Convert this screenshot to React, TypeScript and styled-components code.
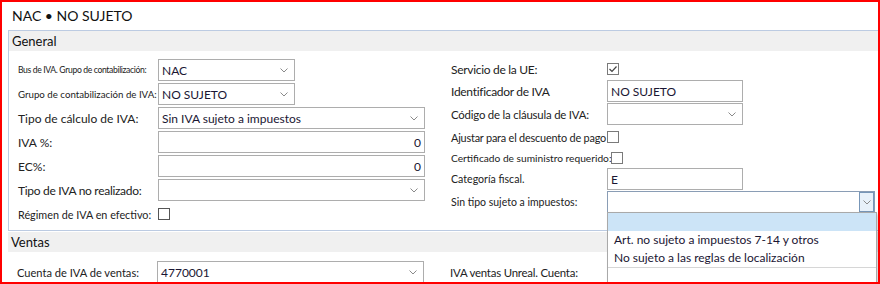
import styled, { createGlobalStyle } from "styled-components";

const GlobalStyle = createGlobalStyle`
  html, body {
    margin: 0;
    padding: 0;
    background: #ffffff;
  }
  body {
    font-family: Lato, "Liberation Sans", sans-serif;
    color: #1b1b1b;
  }
`;

const Frame = styled.div`
  position: relative;
  width: 880px;
  height: 284px;
  box-sizing: border-box;
  border: 2px solid #ff0000;
  padding-left: 6px;
  background: #ffffff;
  overflow: hidden;
`;

const Title = styled.div`
  height: 28px;
  line-height: 28px;
  padding-left: 4px;
  font-size: 14px;
  color: #111;
`;

const Section = styled.div<{ $boxed?: boolean }>`
  border: ${(p) => (p.$boxed ? "1px solid #bccbe2" : "none")};
  border-right: none;
  margin-top: ${(p) => (p.$boxed ? "0" : "1px")};
`;

const SectionHeader = styled.div`
  height: 20px;
  line-height: 20px;
  padding-left: 3px;
  background: #f0f0f0;
  font-size: 13px;
  color: #111;
`;

const Body = styled.div<{ $top: number }>`
  display: flex;
  gap: 26px;
  padding: ${(p) => p.$top}px 0 4px 9px;
`;

const Column = styled.div<{ $w?: number }>`
  display: flex;
  flex-direction: column;
  width: ${(p) => (p.$w ? `${p.$w}px` : "auto")};
`;

const Row = styled.div<{ $h: number }>`
  display: flex;
  align-items: center;
  height: ${(p) => p.$h}px;
`;

const Label = styled.div<{ $w: number; $size?: number; $track?: number }>`
  flex-shrink: 0;
  min-width: ${(p) => p.$w}px;
  font-size: ${(p) => p.$size ?? 12}px;
  letter-spacing: ${(p) => p.$track ?? 0}px;
  white-space: nowrap;
  color: #222;
`;

const Field = styled.div<{ $w: number; $focus?: boolean; $right?: boolean }>`
  position: relative;
  display: flex;
  align-items: center;
  justify-content: ${(p) => (p.$right ? "flex-end" : "space-between")};
  box-sizing: border-box;
  width: ${(p) => p.$w}px;
  height: 22px;
  padding: 0 3px;
  border: 1px solid ${(p) => (p.$focus ? "#8a9db5" : "#adadad")};
  background: #ffffff;
  font-size: 12px;
  color: #1a1633;
  white-space: nowrap;
`;

const ArrowSpot = styled.span<{ $focus?: boolean }>`
  display: flex;
  align-items: center;
  justify-content: center;
  width: 15px;
  height: 20px;
  margin-right: ${(p) => (p.$focus ? "-3px" : "0")};
  box-sizing: border-box;
  border: ${(p) => (p.$focus ? "1px solid #7796b8" : "none")};
  background: ${(p) => (p.$focus ? "#e8f1fa" : "transparent")};
`;

const Box = styled.span<{ $dark?: boolean }>`
  display: inline-flex;
  align-items: center;
  justify-content: center;
  width: 12px;
  height: 12px;
  box-sizing: border-box;
  border: 1px solid ${(p) => (p.$dark ? "#555" : "#7a7a7a")};
  background: #fff;
`;

const DropList = styled.div`
  position: absolute;
  top: 20px;
  left: -1px;
  width: 270px;
  height: 72px;
  box-sizing: border-box;
  border: 1px solid #a9a9a9;
  background: #ffffff;
  box-shadow: 2px 2px 3px rgba(0, 0, 0, 0.18);
  z-index: 5;
`;

const DropItem = styled.div<{ $active?: boolean; $line?: boolean }>`
  height: 18px;
  line-height: 18px;
  padding-left: 6px;
  font-size: 12px;
  color: #1a1633;
  background: ${(p) => (p.$active ? "#cce4f7" : "transparent")};
  border-bottom: ${(p) => (p.$line ? "1px solid #d6d6d6" : "none")};
`;

const Chevron = () => (
  <svg width="8" height="5" viewBox="0 0 8 5">
    <polyline points="0.5,0.5 4,4 7.5,0.5" fill="none" stroke="#8a8a8a" strokeWidth="1" />
  </svg>
);

const Check = () => (
  <svg width="10" height="10" viewBox="0 0 10 10">
    <polyline points="1.5,5 4,7.5 8.5,2.5" fill="none" stroke="#444" strokeWidth="1.2" />
  </svg>
);

const Select = ({ w, value = "" }: { w: number; value?: string }) => (
  <Field $w={w}>
    <span>{value}</span>
    <ArrowSpot>
      <Chevron />
    </ArrowSpot>
  </Field>
);

export default function App() {
  return (
    <>
      <GlobalStyle />
      <Frame>
        <Title>NAC • NO SUJETO</Title>

        <Section $boxed>
          <SectionHeader>General</SectionHeader>
          <Body $top={7}>
            <Column $w={407}>
              <Row $h={24}>
                <Label $w={140} $size={8.6} $track={-0.35}>Bus de IVA. Grupo de contabilización:</Label>
                <Select w={137} value="NAC" />
              </Row>
              <Row $h={24}>
                <Label $w={140} $size={9.7}>Grupo de contabilización de IVA:</Label>
                <Select w={137} value="NO SUJETO" />
              </Row>
              <Row $h={24}>
                <Label $w={140} $size={12}>Tipo de cálculo de IVA:</Label>
                <Select w={267} value="Sin IVA sujeto a impuestos" />
              </Row>
              <Row $h={24}>
                <Label $w={140} $size={12}>IVA %:</Label>
                <Field $w={267} $right>0</Field>
              </Row>
              <Row $h={24}>
                <Label $w={140} $size={12}>EC%:</Label>
                <Field $w={267} $right>0</Field>
              </Row>
              <Row $h={24}>
                <Label $w={140} $size={12} $track={-0.3}>Tipo de IVA no realizado:</Label>
                <Select w={267} />
              </Row>
              <Row $h={24}>
                <Label $w={140} $size={10.8}>Régimen de IVA en efectivo:</Label>
                <Box $dark />
              </Row>
            </Column>

            <Column>
              <Row $h={22}>
                <Label $w={156} $size={12} $track={-0.3}>Servicio de la UE:</Label>
                <Box>
                  <Check />
                </Box>
              </Row>
              <Row $h={22}>
                <Label $w={156} $size={12} $track={-0.3}>Identificador de IVA</Label>
                <Field $w={136}>NO SUJETO</Field>
              </Row>
              <Row $h={24}>
                <Label $w={156} $size={11.4} $track={-0.2}>Código de la cláusula de IVA:</Label>
                <Select w={136} />
              </Row>
              <Row $h={22}>
                <Label $w={156} $size={10.9} $track={-0.2}>Ajustar para el descuento de pago</Label>
                <Box />
              </Row>
              <Row $h={20}>
                <Label $w={156} $size={10.2}>Certificado de suministro requerido:</Label>
                <Box />
              </Row>
              <Row $h={22}>
                <Label $w={156} $size={10.6}>Categoría fiscal.</Label>
                <Field $w={136}>E</Field>
              </Row>
              <Row $h={24}>
                <Label $w={156} $size={10.5}>Sin tipo sujeto a impuestos:</Label>
                <Field $w={268} $focus>
                  <span />
                  <ArrowSpot $focus>
                    <Chevron />
                  </ArrowSpot>
                  <DropList>
                    <DropItem $active />
                    <DropItem>Art. no sujeto a impuestos 7-14 y otros</DropItem>
                    <DropItem $line>No sujeto a las reglas de localización</DropItem>
                  </DropList>
                </Field>
              </Row>
            </Column>
          </Body>
        </Section>

        <Section>
          <SectionHeader>Ventas</SectionHeader>
          <Body $top={8}>
            <Column $w={407}>
              <Row $h={24}>
                <Label $w={140} $size={11.1}>Cuenta de IVA de ventas:</Label>
                <Select w={267} value="4770001" />
              </Row>
            </Column>
            <Column>
              <Row $h={24}>
                <Label $w={156} $size={11.4} $track={-0.2}>IVA ventas Unreal. Cuenta:</Label>
              </Row>
            </Column>
          </Body>
        </Section>
      </Frame>
    </>
  );
}
